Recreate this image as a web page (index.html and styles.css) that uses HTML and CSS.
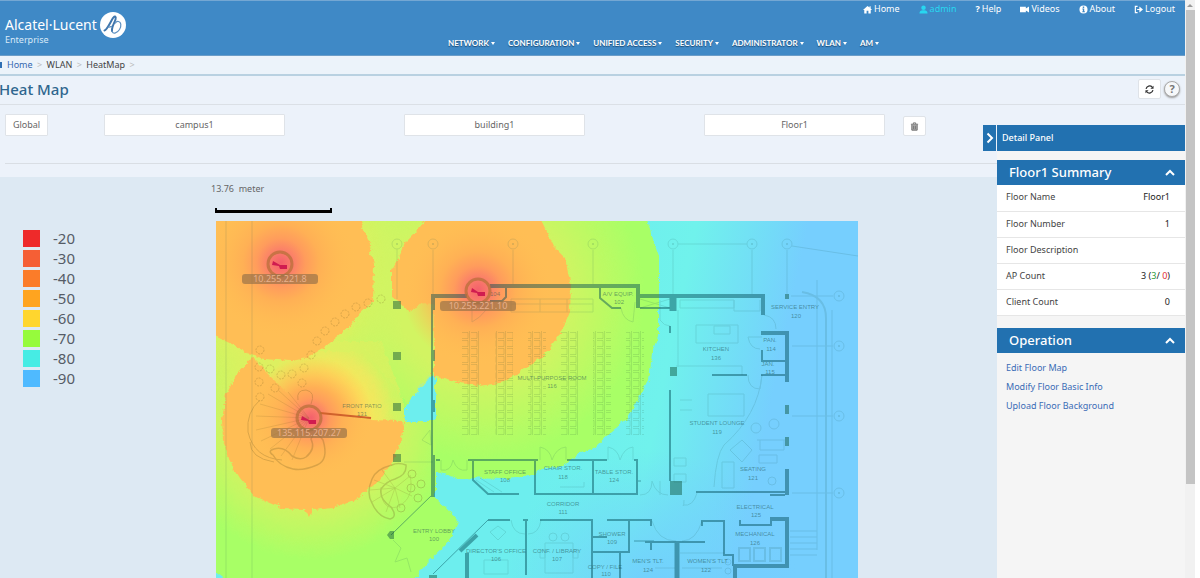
FILE: index.html
```html
<!DOCTYPE html>
<html lang="en">
<head>
  <meta charset="UTF-8">
  <meta name="viewport" content="width=device-width, initial-scale=1.0">
  <title>Heat Map</title>
  <link rel="stylesheet" href="styles.css">
</head>
<body>
  <div class="page">
    <!-- Header -->
    <header class="header">
      <a class="brand" href="#" aria-label="Alcatel-Lucent Enterprise">
        <span class="brand-text">
          <span class="brand-name">Alcatel·Lucent</span>
          <span class="brand-sub">Enterprise</span>
        </span>
        <svg class="brand-logo" viewBox="0 0 26 26" aria-hidden="true">
          <circle cx="13" cy="13" r="13" fill="#fff"/>
          <path d="M4.500 18.500C7 18 10.500 10 13 6c2-2.800 3.300-1.500 2.500 1.500C14.500 11 11.500 15 12 19" fill="none" stroke="#3f76ad" stroke-width="2" stroke-linecap="round"/>
          <path d="M12 19c.5 3.500 5 2.500 7.500-1.500 2.300-4 1.500-7.500-1-8-1.500-.3-2.500.5-3 1.500M8 15c1.500.3 2.500 0 3.500-.7" fill="none" stroke="#5c8fc0" stroke-width="1.200" stroke-linecap="round"/>
        </svg>
      </a>
      <div class="menus">
        <nav class="user-nav" aria-label="User">
          <a href="#"><svg viewBox="0 0 10 10"><path d="M5 1 0 5.500h1.400V9.500H4V6.500h2v3h2.600v-4H10L8.500 4V1.500H7.300v1.400z"/></svg>Home</a>
          <a href="#" class="current"><svg viewBox="0 0 10 10"><circle cx="5" cy="3" r="2.500"/><path d="M.5 9.500C.5 6.500 2.500 5.500 5 5.800c2.500-.3 4.500.7 4.500 3.700z"/></svg>admin</a>
          <a href="#"><b>?</b>Help</a>
          <a href="#"><svg viewBox="0 0 10 10"><path d="M0 2h6.500v2L10 1.800v6.400L6.500 6v2H0z"/></svg>Videos</a>
          <a href="#"><svg viewBox="0 0 10 10"><path fill-rule="evenodd" d="M5 .5a4.500 4.500 0 1 1 0 9 4.500 4.500 0 0 1 0-9zM4.200 1.800v1.400h1.600V1.800zM3.700 4v1h.6v2h-.6v1h2.800V7h-.7V4z"/></svg>About</a>
          <a href="#"><svg viewBox="0 0 10 10"><path d="M4 1.500H1.500v7H4M3.500 5H8" fill="none" stroke="#fff" stroke-width="1.300"/><path d="M6 1.800 10 5 6 8.200z"/></svg>Logout</a>
        </nav>
        <nav class="main-nav" aria-label="Main">
          <a href="#">NETWORK</a>
          <a href="#">CONFIGURATION</a>
          <a href="#">UNIFIED ACCESS</a>
          <a href="#">SECURITY</a>
          <a href="#">ADMINISTRATOR</a>
          <a href="#">WLAN</a>
          <a href="#">AM</a>
        </nav>
      </div>
    </header>

    <!-- Breadcrumb -->
    <nav class="breadcrumb" aria-label="Breadcrumb">
      <span class="crumb-home"></span>
      <a href="#">Home</a><i>&gt;</i><span>WLAN</span><i>&gt;</i><span>HeatMap</span><i>&gt;</i>
    </nav>

    <div class="title-bar">
      <h1>Heat Map</h1>
      <button class="refresh" aria-label="Refresh"><svg viewBox="0 0 10 10"><path d="M1.200 4.200A3.900 3.900 0 0 1 8 2.400M8.800 5.800A3.900 3.900 0 0 1 2 7.600" fill="none" stroke="#333" stroke-width="1.400"/><path d="M9.500.7v3.500H6zM.5 9.300V5.800H4z" fill="#333"/></svg></button>
      <button class="help" aria-label="Help">?</button>
    </div>

    <main class="content">
      <!-- Location -->
      <div class="location">
        <button class="place place-root">Global</button>
        <button class="place">campus1</button>
        <button class="place">building1</button>
        <button class="place">Floor1</button>
        <button class="trash" aria-label="Delete"><svg viewBox="0 0 10 10"><path d="M2 3h6v6.500H2z" fill="#aaa"/><path d="M1 2.500h8M3.700 2.300V1h2.600v1.300M2 3v6h6V3M4 4.200v3.600M6 4.200v3.600" fill="none" stroke="#777" stroke-width="1.100"/></svg></button>
      </div>

      <div class="stage">
        <ul class="legend">
          <li><span class="swatch s20"></span>-20</li>
          <li><span class="swatch s30"></span>-30</li>
          <li><span class="swatch s40"></span>-40</li>
          <li><span class="swatch s50"></span>-50</li>
          <li><span class="swatch s60"></span>-60</li>
          <li><span class="swatch s70"></span>-70</li>
          <li><span class="swatch s80"></span>-80</li>
          <li><span class="swatch s90"></span>-90</li>
        </ul>
        <div class="map">
          <div class="scale-text">13.76&nbsp; meter</div>
          <div class="scale-bar"></div>
          <svg class="floor" width="642" height="357" viewBox="216 221 642 357" role="img" aria-label="Floor1 heat map">
            <defs>
              <linearGradient id="far" gradientUnits="userSpaceOnUse" x1="560" y1="340" x2="775" y2="385">
                <stop offset="0" stop-color="#6deeee"/>
                <stop offset="0.5" stop-color="#70f2ec"/>
                <stop offset="0.85" stop-color="#73daf8"/>
                <stop offset="1" stop-color="#76cffe"/>
              </linearGradient>
              <radialGradient id="low" gradientUnits="userSpaceOnUse" cx="650" cy="600" r="150">
                <stop offset="0" stop-color="#72ccff"/>
                <stop offset="1" stop-color="#72ccff" stop-opacity="0"/>
              </radialGradient>
              <radialGradient id="near1" gradientUnits="userSpaceOnUse" cx="280" cy="265" r="150">
                <stop offset="0.550" stop-color="#dff060"/>
                <stop offset="1" stop-color="#dff060" stop-opacity="0"/>
              </radialGradient>
              <radialGradient id="near2" gradientUnits="userSpaceOnUse" cx="478" cy="293" r="165">
                <stop offset="0.500" stop-color="#d2f462"/>
                <stop offset="1" stop-color="#d2f462" stop-opacity="0"/>
              </radialGradient>
              <radialGradient id="near3" gradientUnits="userSpaceOnUse" cx="309" cy="418" r="140">
                <stop offset="0.500" stop-color="#ddf060"/>
                <stop offset="1" stop-color="#ddf060" stop-opacity="0"/>
              </radialGradient>
              <radialGradient id="wall3" gradientUnits="userSpaceOnUse" cx="322" cy="412" r="70">
                <stop offset="0" stop-color="#ffb052"/>
                <stop offset="0.350" stop-color="#ffe05a"/>
                <stop offset="0.550" stop-color="#fbe65c"/>
                <stop offset="1" stop-color="#ffe05a" stop-opacity="0"/>
              </radialGradient>
              <radialGradient id="hot">
                <stop offset="0" stop-color="#f4606c"/>
                <stop offset="0.150" stop-color="#fa7c6a"/>
                <stop offset="0.320" stop-color="#ff9c5c"/>
                <stop offset="0.500" stop-color="#ffb055"/>
                <stop offset="1" stop-color="#ffc052" stop-opacity="0"/>
              </radialGradient>
              <pattern id="chairs" width="9" height="8" patternUnits="userSpaceOnUse" x="462" y="332">
                <path d="M0 .5h6v6H0M7.500 0v8" fill="none" stroke="#205030" stroke-width="1" opacity="0.130"/>
              </pattern>
              <!-- rough edge of the signal cells -->
              <filter id="cells" x="-5%" y="-5%" width="110%" height="110%">
                <feTurbulence type="turbulence" baseFrequency="0.12" numOctaves="1" seed="4"/>
                <feDisplacementMap in="SourceGraphic" scale="5" xChannelSelector="R" yChannelSelector="G"/>
                <feGaussianBlur stdDeviation="0.7"/>
              </filter>
            </defs>

            <!-- Signal strength -->
            <path d="M216 221h642v357H216z" fill="url(#far)"/>
            <path d="M216 221h642v357H216z" fill="url(#low)"/>
            <g filter="url(#cells)">
              <path d="M200 200H640L650 235 657 255 657 335 650 352 647 378 638 395 625 418 610 430 594 445 578 452 561 464 543 466 528 474 505 477 456 476 434 470V497L446 508 457 520 450 535 442 545 426 560 406 590H240L200 560zM434 370 420 382 412 394 404 404V420H434z" fill="#a8ff66" fill-rule="evenodd"/>
              <path d="M200 200H434V370L404 404 404 420 434 422V497L457 520 406 590H200z" fill="url(#near1)"/>
              <path d="M372 200H640L657 255V335L647 378 625 418 561 464 505 477 434 470V370L405 402 350 330z" fill="url(#near2)"/>
              <path d="M200 340H380L404 408V420H434V497L457 520 406 590H200z" fill="url(#near3)"/>
              <path d="M262 350H400V420H280z" fill="url(#wall3)"/>
              <path d="M200 200H353L362 228 369 245 372 262 371 300 358 311 346 326 323 345 305 356 289 359 263 357 249 353 234 344 200 328z" fill="#ffbe54"/>
              <path d="M434 200H530L544 228 552 245 563 256 569 285 568 310 558 334 546 350 532 361 517 371 503 380 478 384 453 380 432 374V301L418 303 406 309 398 300 390 295V268L398 254 404 240 418 226z" fill="#ffbe54"/>
              <path d="M250 356 266 372 282 388 296 401 316 410 368 418 402 419 400 438 391 459 378 478 352 499 332 506 310 508 307 515 303 508 281 507 254 495 238 476 228 460 221 438 220 418 224 393 234 373z" fill="#ffbe54"/>
            </g>
            <circle cx="281" cy="263" r="76" fill="url(#hot)"/>
            <circle cx="478" cy="290" r="76" fill="url(#hot)"/>
            <circle cx="311" cy="418" r="62" fill="url(#hot)"/>

            <!-- Floor plan, thin lines -->
            <g class="thin">
              <path d="M226 221v357M252 221v357M397 249v50M433 250v44M513 250v34M593 250v34M673 250v44M752 250v44M787 250v44"/>
              <path d="M678 244h69M792 246l66 10M791 296h42M792 346h41M792 416h41M792 493h41"/>
              <circle cx="397" cy="244" r="5"/><circle cx="433" cy="244" r="5"/><circle cx="513" cy="244" r="5"/><circle cx="593" cy="244" r="5"/><circle cx="673" cy="244" r="5"/><circle cx="752" cy="244" r="5"/><circle cx="787" cy="244" r="5"/>
              <circle cx="839" cy="296" r="5"/><circle cx="839" cy="346" r="5"/><circle cx="839" cy="416" r="5"/><circle cx="839" cy="493" r="5"/>
              <path d="M397 243v2M433 243v2M513 243v2M593 243v2M673 243v2M752 243v2M787 243v2M839 295v2M839 345v2M839 415v2M839 492v2" stroke-width="2"/>
              <path d="M511 299h82M511 304h82M511 312h82M511 299v13M540 299v13M567 299v13M593 299v13M640 299l30 9M640 308l30-9"/>
              <path d="M621 308q2 12 12 14l2-20M472 308v14q8-4 14-12"/>
              <path d="M696 325h42v18h-42zM714 326h16v8h-16zM680 300h54v8h-54zM734 300v11h26v-11M676 366h66v9M678 310v57M708 394h36v22h-36zM660 300v20q4 6 10 6"/>
              <path d="M748 337h14M748 337q2 12 12 12M764 315q12 2 12 14M748 375q0 14 12 14l2-14M680 400h12M680 410h12M674 458h12v8h-12zM674 474h12v8h-12z"/>
              <path d="M762 375q-4 40-38 70-8 10-10 42M757 440h28M760 440v10h24v-10M730 450l12-10 10 10-10 12zM722 462h12v26h-12zM759 455h18v8h-18z"/>
              <circle cx="774" cy="424" r="5"/><circle cx="756" cy="428" r="5"/><circle cx="772" cy="481" r="4"/>
              <path d="M739 548h11v13h-11zM754 548h11v13h-11zM770 548h11v13h-11z" stroke-width="2"/>
              <path d="M790 531h27M790 537h27M790 543h27M790 549h27M790 555h27M817 280v270M832 310v268"/>
              <path d="M802 292q24 4 24 26V578" stroke-width="2"/>
              <path d="M441 460v10q10 2 12-10 4 12 14 10v-10M540 460v-13q10 2 12 13 4-12 14-13v13M608 460v-13q10 2 12 13 4-12 13-13v13"/>
              <path d="M476 480l18 12M480 478l22 14M511 520q2 14 14 14M541 520q-2 14-13 14M652 521q6 20 24 20M702 521q-6 20-20 20M560 487h24v-5"/>
              <path d="M545 543h28v30h-28zM540 550h5v8h-5zM573 550h5v8h-5zM484 560h24v14h-24zM490 532l8 8 8-8-8-6z"/>
              <circle cx="553" cy="537" r="4"/><circle cx="565" cy="537" r="4"/><circle cx="728" cy="562" r="3"/><circle cx="728" cy="571" r="3"/>
              <path d="M680 553h44M655 568h20M682 568h40M684 500q0 6-1 6M683 505q10 2 14-12M660 495v-14M640 495q12 0 12-14 4 14 16 14"/>
              <path d="M433 462H404M430 430l-8 10 9 5zM393 540l8 8-6 14 12-4 4 14"/>
            </g>

            <!-- Trees and planting -->
            <g class="plants">
              <path d="M298 400q-2-10 8-10 10 2 5 14M260 400q-14 12-12 32 6 26 34 28M250 442q0 16 24 20"/>
              <path d="M309 418 268 394M309 418 260 404M309 418 256 416M309 418 256 430M309 418 261 441M309 418 270 449M309 418 281 456M309 418 292 460M309 418 278 390M309 418 288 392" opacity="0.600"/>
              <path d="M273 455q-6-4 1-6 10-3 18 7 8 5 14 1 10-8 5-18 4-10 12 1 6 20-6 25-14 6-24 4-14-3-20-14z" stroke-width="1.500"/>
              <path d="M406 465q-8-3-14 0-16 4-20 14-6 14 0 24 6 14 18 16 8-2 1-12-12-8-10-18 6-8 14-10 12-4 11-14z" stroke-width="1.500"/>
              <path d="M395 488 374 480M395 488 370 490M395 488 372 502M395 488 382 470M395 488 410 476M395 488 412 496M395 488 400 508M395 488 386 512M381 487q0 24 16 20 18-8 13-32" opacity="0.600"/>
              <circle cx="412" cy="474" r="4"/><circle cx="421" cy="484" r="4"/><circle cx="418" cy="498" r="4"/><circle cx="401" cy="508" r="4"/><circle cx="411" cy="488" r="4"/>
              <g stroke-dasharray="2 1">
                <circle cx="381" cy="299" r="4"/><circle cx="368" cy="303" r="4"/><circle cx="356" cy="307" r="4"/><circle cx="345" cy="314" r="4"/><circle cx="335" cy="322" r="4"/><circle cx="325" cy="331" r="4"/><circle cx="317" cy="341" r="4"/><circle cx="311" cy="355" r="4"/><circle cx="304" cy="368" r="4"/><circle cx="292" cy="374" r="4"/><circle cx="281" cy="375" r="4"/><circle cx="270" cy="369" r="4"/><circle cx="259" cy="367" r="4"/><circle cx="260" cy="350" r="4"/><circle cx="259" cy="382" r="4"/><circle cx="275" cy="388" r="4"/><circle cx="302" cy="383" r="4"/><circle cx="260" cy="397" r="4"/>
              </g>
            </g>

            <!-- Seating rows -->
            <g fill="url(#chairs)">
              <path d="M462 331h18v104h-18zM495 331h18v104h-18zM528 331h18v104h-18zM560 331h18v104h-18zM593 331h18v104h-18zM626 331h18v104h-18z"/>
            </g>

            <!-- Walls -->
            <g class="wall">
              <path stroke-width="4" d="M431 296h36M490 286h150M638 288v20M640 296h125M763 298v17M761 333h28M787 335v47M787 469v26M770 519h15M787 517v51M733 566h52M735 568v10M433 298v12M433 350v11M433 400v12M433 455v42M467 553v25"/>
              <path stroke-width="2" d="M432 310v40M432 361v39M432 412v43M506 288v9l-4 4h-12M600 288v10l12 10h9M640 308h30M670 326v7M670 390v91M762 350v11h23M712 375h35M761 375h24M712 492h73M696 492h16M770 495h15"/>
              <path stroke-width="2" d="M436 460h4M468 460h70M473 460v20l15 14h31M535 460v34h102v-34h-3M567 460h40M593 460v34M488 520h22M523 520h5M526 520v55M540 520h52v58M592 537h15M592 552h37v-32M607 520h44v6M620 553v25M645 542h60M651 542v8M702 526v-5h22v34h9v11M740 520v5h31v-6"/>
              <path stroke-width="1" d="M433 574l55-54M391 535l42-41M634 541h20M637 481h4"/>
              <path stroke-width="4" d="M460 551l17-16"/>
              <path stroke-width="5" d="M677 542v36"/>
              <path stroke-width="7" d="M673 298v13"/>
            </g>
            <path class="block" d="M393 301h8v8h-8zM393 352h8v8h-8zM393 403h8v8h-8zM393 454h8v8h-8zM785 294h4v5h-4zM670 367h7v9h-7zM670 481h12v14h-12zM785 405h4v9h-4zM785 437h4v9h-4zM429 575h8v3h-8zM387 535l3-4h4v8h-4z"/>
            <path d="M320 413l51 5" stroke="#d0622c" stroke-width="2"/>

            <!-- Rooms -->
            <g class="room">
              <text x="362" y="408">FRONT PATIO</text><text x="362" y="416">131</text>
              <text x="495" y="296">104</text>
              <text x="618" y="296">A/V EQUIP.</text><text x="619" y="304">102</text>
              <text x="552" y="380">MULTI-PURPOSE ROOM</text><text x="552" y="388">116</text>
              <text x="716" y="351">KITCHEN</text><text x="716" y="360">136</text>
              <text x="770" y="342">PAN.</text><text x="771" y="351">114</text>
              <text x="768" y="366">JAN.</text><text x="770" y="374">115</text>
              <text x="795" y="309">SERVICE ENTRY</text><text x="796" y="318">120</text>
              <text x="717" y="425">STUDENT LOUNGE</text><text x="717" y="434">119</text>
              <text x="753" y="471">SEATING</text><text x="753" y="480">121</text>
              <text x="755" y="509">ELECTRICAL</text><text x="756" y="517">125</text>
              <text x="755" y="536">MECHANICAL</text><text x="755" y="545">126</text>
              <text x="505" y="474">STAFF OFFICE</text><text x="505" y="482">108</text>
              <text x="563" y="470">CHAIR STOR.</text><text x="563" y="479">118</text>
              <text x="614" y="474">TABLE STOR.</text><text x="614" y="482">124</text>
              <text x="563" y="506">CORRIDOR</text><text x="563" y="514">111</text>
              <text x="434" y="533">ENTRY LOBBY</text><text x="434" y="541">100</text>
              <text x="496" y="553">DIRECTOR'S OFFICE</text><text x="496" y="561">106</text>
              <text x="557" y="553">CONF. / LIBRARY</text><text x="557" y="561">107</text>
              <text x="612" y="536">SHOWER</text><text x="612" y="544">109</text>
              <text x="605" y="569">COPY / FILE</text><text x="606" y="576">110</text>
              <text x="648" y="563">MEN'S TLT.</text><text x="648" y="572">124</text>
              <text x="708" y="563">WOMEN'S TLT.</text><text x="706" y="572">122</text>
            </g>

            <!-- Access points -->
            <g class="ap">
              <circle cx="280" cy="264" r="12"/><path d="M273 261l7 4h7v4h-7l-1-3-7-1z"/>
              <rect x="242" y="274" width="76" height="10" rx="3"/><text x="280" y="282">10.255.221.8</text>
            </g>
            <g class="ap">
              <circle cx="478" cy="291" r="12"/><path d="M472 288l6 4h7v4h-7l-1-3-6-1z"/>
              <rect x="440" y="301" width="76" height="10" rx="3"/><text x="478" y="309">10.255.221.10</text>
            </g>
            <g class="ap">
              <circle cx="309" cy="418" r="12"/><path d="M302 416l7 4h7v4h-7l-1-3-7-1z"/>
              <rect x="271" y="428" width="76" height="10" rx="3"/><text x="309" y="436">135.115.207.27</text>
            </g>
          </svg>
        </div>
      </div>

      <!-- Detail panel laid over the map -->
      <aside class="detail">
        <button class="toggle" aria-label="Hide detail panel"><svg viewBox="0 0 8 12"><path d="M1.500 1.500 6 6l-4.500 4.500"/></svg></button>
        <div class="panel">
          <h2 class="panel-title">Detail Panel</h2>
          <section>
            <h3>Floor1 Summary<svg viewBox="0 0 10 7"><path d="M1 6l4-4 4 4"/></svg></h3>
            <table>
              <tr><th scope="row">Floor Name</th><td>Floor1</td></tr>
              <tr><th scope="row">Floor Number</th><td>1</td></tr>
              <tr><th scope="row">Floor Description</th><td></td></tr>
              <tr><th scope="row">AP Count</th><td>3 (<span class="up">3</span>/ <span class="down">0</span>)</td></tr>
              <tr><th scope="row">Client Count</th><td>0</td></tr>
            </table>
          </section>
          <section>
            <h3>Operation<svg viewBox="0 0 10 7"><path d="M1 6l4-4 4 4"/></svg></h3>
            <ul class="operations">
              <li><a href="#">Edit Floor Map</a></li>
              <li><a href="#">Modify Floor Basic Info</a></li>
              <li><a href="#">Upload Floor Background</a></li>
            </ul>
          </section>
        </div>
      </aside>
    </main>
  </div>

  <div class="scroll-track" aria-hidden="true">
    <span class="scroll-up"></span>
    <span class="scroll-thumb"></span>
  </div>
</body>
</html>
```

FILE: styles.css
```css
* {
  box-sizing: border-box;
}

body {
  margin: 0;
  height: 100vh;
  display: flex;
  overflow: hidden;
  background: #fff;
  color: #444;
  font: 9px/12px "Noto Sans", sans-serif;
}

button {
  font: inherit;
  color: inherit;
  padding: 0;
  cursor: pointer;
}

a {
  text-decoration: none;
}

ul {
  list-style: none;
  margin: 0;
  padding: 0;
}

.page {
  flex: 1;
  min-width: 0;
  display: flex;
  flex-direction: column;
  background: #ecf2fa;
}

/* Header */
.header {
  display: flex;
  justify-content: space-between;
  height: 56px;
  background: #3f89c6;
  border-top: 1px solid #74a7d3;
  border-bottom: 1px solid #6b9dc8;
}

.brand {
  display: flex;
  align-items: flex-start;
  gap: 3px;
  padding: 11px 0 0 5px;
  color: #fff;
}

.brand-text {
  display: flex;
  flex-direction: column;
  padding-top: 5px;
}

.brand-name {
  font-size: 14px;
  line-height: 16px;
}

.brand-sub {
  font-size: 9px;
  line-height: 14px;
  color: #d9eaf8;
}

.brand-logo {
  width: 26px;
  height: 26px;
}

.menus {
  width: 737px;
  display: flex;
  flex-direction: column;
  justify-content: space-between;
}

.user-nav {
  display: flex;
  justify-content: flex-end;
  gap: 19px;
  padding: 2px 10px 0 0;
}

.user-nav a {
  display: flex;
  align-items: center;
  gap: 2px;
  color: #fff;
}

.user-nav a.current {
  color: #28d7f0;
}

.user-nav svg {
  width: 9px;
  height: 9px;
  fill: currentColor;
}

.main-nav {
  display: flex;
  gap: 13px;
  padding-bottom: 6px;
}

.main-nav a {
  display: flex;
  align-items: center;
  gap: 2px;
  color: #fff;
  font: bold 8px/12px Lato, sans-serif;
  text-shadow: 0 1px 1px #1d4a72;
}

.main-nav a::after {
  content: "";
  border: 2px solid transparent;
  border-top: 3px solid #fff;
  border-bottom: 0;
}

/* Breadcrumb */
.breadcrumb {
  display: flex;
  align-items: center;
  height: 20px;
  background: #ecf3fa;
  border-bottom: 2px solid #b9d1e1;
}

.crumb-home {
  width: 2px;
  height: 6px;
  margin-right: 5px;
  background: #2f6fb3;
}

.breadcrumb a {
  color: #3568b0;
}

.breadcrumb i {
  width: 14px;
  text-align: center;
  font-style: normal;
  color: #bbb;
}

.title-bar {
  display: flex;
  align-items: center;
  gap: 2px;
  height: 29px;
  padding: 0 5px 2px 0;
  border-bottom: 1px solid #dbe0e6;
}

h1 {
  flex: 1;
  margin: 0 0 0 -1px;
  font-size: 15px;
  line-height: 20px;
  font-weight: 500;
  color: #2f668e;
}

.refresh,
.trash {
  display: flex;
  align-items: center;
  justify-content: center;
  width: 23px;
  height: 20px;
  background: #fff;
  border: 1px solid #dfe3e8;
  border-radius: 2px;
}

.refresh svg,
.trash svg {
  width: 9px;
  height: 9px;
}

.help {
  width: 16px;
  height: 16px;
  margin-left: 1px;
  border: 1px solid #aaa;
  border-radius: 50%;
  background: #f6f8fa;
  box-shadow: 0 1px 2px #999;
  font-size: 11px;
  line-height: 12px;
  font-weight: bold;
  color: #777;
}

/* Content */
.content {
  position: relative;
  flex: 1;
  min-height: 0;
  display: flex;
  flex-direction: column;
}

.location {
  display: flex;
  gap: 119px;
  margin: 0 0 13px 5px;
  padding: 9px 0 27px;
  border-bottom: 1px solid #d9dee4;
}

.place {
  width: 181px;
  height: 22px;
  background: #fff;
  border: 1px solid #dfe3e8;
  border-radius: 1px;
  color: #666;
}

.place-root {
  width: 43px;
  margin-right: -63px;
}

.trash {
  margin: 2px 0 0 -101px;
}

.stage {
  flex: 1;
  min-height: 0;
  display: flex;
  background: #dde9f3;
}

.legend {
  width: 211px;
  padding: 53px 0 0 23px;
  display: flex;
  flex-direction: column;
  gap: 3px;
}

.legend li {
  display: flex;
  align-items: center;
  gap: 13px;
  font-size: 15px;
  line-height: 17px;
  color: #555c66;
}

.swatch {
  width: 17px;
  height: 17px;
}

.s20 { background: #ee2a2a; }
.s30 { background: #f55f35; }
.s40 { background: #fb7c29; }
.s50 { background: #ffa41f; }
.s60 { background: #ffd62e; }
.s70 { background: #96fb3c; }
.s80 { background: #46ece4; }
.s90 { background: #4fbaff; }

.scale-text {
  padding-top: 6px;
  color: #666;
}

.scale-bar {
  width: 117px;
  height: 5px;
  margin: 13px 0 8px 4px;
  border: 2px solid #000;
  border-top: 0;
  border-bottom-width: 3px;
}

.floor {
  display: block;
  margin-left: 5px;
}

/* Floor drawing */
.thin {
  fill: none;
  stroke: #1d5a55;
  opacity: 0.14;
}

.plants {
  fill: none;
  stroke: #6e5a20;
  opacity: 0.25;
}

.wall {
  fill: none;
  stroke: #004a55;
  opacity: 0.45;
}

.block {
  fill: #0a5038;
  opacity: 0.45;
}

.room text {
  font: 6px "Liberation Sans", sans-serif;
  fill: #1c5050;
  fill-opacity: 0.55;
  text-anchor: middle;
}

.ap circle {
  fill: none;
  stroke: #b8703a;
  stroke-width: 3;
  opacity: 0.75;
}

.ap path {
  fill: #d01c50;
}

.ap rect {
  fill: #9a7448;
  opacity: 0.7;
}

.ap text {
  font: 9px "Noto Sans", sans-serif;
  fill: #e8b08c;
  text-anchor: middle;
}

/* Detail panel */
.detail {
  position: absolute;
  top: 20px;
  right: 0;
  bottom: 0;
  display: flex;
  align-items: flex-start;
}

.toggle {
  width: 13px;
  height: 26px;
  margin-right: 1px;
  background: #2271b0;
  border: 0;
}

.toggle svg {
  width: 8px;
  height: 12px;
  vertical-align: middle;
}

.toggle path,
h3 path {
  fill: none;
  stroke: #fff;
  stroke-width: 2;
}

.panel {
  width: 188px;
  height: 100%;
  background: #f5f5f5;
}

.panel-title {
  margin: 0;
  padding: 0 5px;
  font-size: 9px;
  line-height: 26px;
  font-weight: 500;
  color: #fff;
  background: #2271b0;
}

.panel section {
  margin-top: 9px;
}

.panel section + section {
  margin-top: 12px;
}

h3 {
  display: flex;
  align-items: center;
  justify-content: space-between;
  margin: 0;
  padding: 0 10px 0 12px;
  font-size: 13px;
  line-height: 25px;
  font-weight: 500;
  color: #fff;
  background: #2271b0;
}

h3 svg {
  width: 10px;
  height: 7px;
}

table {
  width: 100%;
  border-collapse: collapse;
  background: #fff;
}

tr {
  height: 26px;
  border-bottom: 1px solid #e6e6e6;
}

th,
td {
  padding: 0 15px 1px 9px;
  font-weight: normal;
  text-align: left;
}

td {
  text-align: right;
  color: #222;
}

.up {
  color: #2c9a3a;
}

.down {
  color: #e02b35;
}

.operations {
  padding: 5px 9px 9px;
}

.operations li {
  line-height: 19px;
}

.operations a {
  color: #3a6cb5;
}

/* Scrollbar strip */
.scroll-track {
  width: 10px;
  margin-right: 5px;
  display: flex;
  flex-direction: column;
  align-items: center;
  background: #f1f1f1;
}

.scroll-up {
  margin: 4px 0 3px;
  border: 3px solid transparent;
  border-top: 0;
  border-bottom: 3px solid #999;
}

.scroll-thumb {
  width: 9px;
  height: 82%;
  background: #c4c4c4;
}
```
